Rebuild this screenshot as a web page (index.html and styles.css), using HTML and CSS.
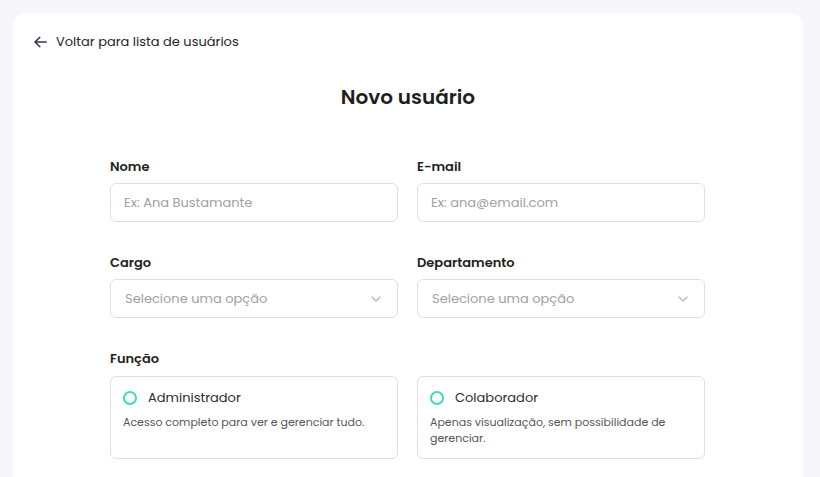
FILE: index.html
```html
<!DOCTYPE html>
<html lang="pt-BR">
<head>
<meta charset="utf-8">
<title>Novo usuário</title>
<link rel="stylesheet" href="styles.css">
</head>
<body>
<main class="card">
  <a class="back" href="#">
    <svg class="back-icon" width="13" height="12" viewBox="0 0 13 12" fill="none" stroke="currentColor" stroke-width="1.5" stroke-linecap="round" stroke-linejoin="round"><path d="M12.2 6H1M5.8 1.2L1 6l4.8 4.8"/></svg>
    <span>Voltar para lista de usuários</span>
  </a>
  <h1 class="title">Novo usuário</h1>
  <form class="form">
    <div class="field">
      <label class="label">Nome</label>
      <div class="input"><span class="placeholder">Ex: Ana Bustamante</span></div>
    </div>
    <div class="field">
      <label class="label">E-mail</label>
      <div class="input"><span class="placeholder">Ex: ana@email.com</span></div>
    </div>
    <div class="field">
      <label class="label">Cargo</label>
      <div class="input select"><span class="placeholder sel">Selecione uma opção</span>
        <svg class="chev" width="10" height="6" viewBox="0 0 10 6" fill="none" stroke="currentColor" stroke-width="1.2" stroke-linecap="round" stroke-linejoin="round"><path d="M1 1l4 4 4-4"/></svg>
      </div>
    </div>
    <div class="field">
      <label class="label">Departamento</label>
      <div class="input select"><span class="placeholder sel">Selecione uma opção</span>
        <svg class="chev" width="10" height="6" viewBox="0 0 10 6" fill="none" stroke="currentColor" stroke-width="1.2" stroke-linecap="round" stroke-linejoin="round"><path d="M1 1l4 4 4-4"/></svg>
      </div>
    </div>
    <div class="field">
      <label class="label">Função</label>
      <div class="option">
        <div class="option-head"><span class="radio"></span><span class="option-title">Administrador</span></div>
        <p class="option-desc">Acesso completo para ver e gerenciar tudo.</p>
      </div>
    </div>
    <div class="field">
      <label class="label label-empty">&nbsp;</label>
      <div class="option">
        <div class="option-head"><span class="radio"></span><span class="option-title">Colaborador</span></div>
        <p class="option-desc">Apenas visualização, sem possibilidade de gerenciar.</p>
      </div>
    </div>
  </form>
</main>
</body>
</html>
```

FILE: styles.css
```css
* { box-sizing: border-box; }
html, body { margin: 0; padding: 0; }
body {
  background: #f6f6fb;
  font-family: "Poppins", "Inter", "Liberation Sans", sans-serif;
  color: #1f1f24;
  padding: 14px 17px 0 13px;
  height: 477px;
  overflow: hidden;
}
.card {
  background: #ffffff;
  border-radius: 10px;
  min-height: 520px;
  padding: 20px 0 0 0;
}
.back {
  display: flex;
  align-items: center;
  gap: 9px;
  margin-left: 21px;
  text-decoration: none;
  color: #25222d;
  font-size: 13px;
  line-height: 16px;
  height: 16px;
}
.back-icon { color: #3a3350; }
.title {
  margin: 34px 0 0 0;
  text-align: center;
  font-size: 20px;
  line-height: 26px;
  font-weight: 600;
  color: #1f1f22;
}
.form {
  width: 595px;
  margin: 47px 0 0 97px;
  display: grid;
  grid-template-columns: 288px 288px;
  column-gap: 19px;
  row-gap: 31px;
}
.field { display: flex; flex-direction: column; }
.label {
  font-size: 13px;
  line-height: 20px;
  font-weight: 600;
  color: #1f1f22;
  margin-bottom: 6px;
}
.input {
  height: 39px;
  border: 1px solid #e0e0e4;
  border-radius: 6px;
  display: flex;
  align-items: center;
  padding: 0 13px;
}
.placeholder { font-size: 13px; color: #a0a0a5; }
.select { padding: 0 14px; justify-content: space-between; }
.chev { color: #b5b5ba; margin-right: 2px; }
.option {
  height: 83px;
  margin-top: 1px;
  border: 1px solid #e0e0e4;
  border-radius: 6px;
  padding: 12px 12px 0 12px;
}
.option-head { display: flex; align-items: center; gap: 11px; height: 18px; }
.radio {
  width: 14px; height: 14px;
  border: 2px solid #3fd8c2;
  border-radius: 50%;
  flex: none;
}
.option-title { font-size: 13px; color: #2b2b30; }
.option-desc {
  margin: 7px 0 0 0;
  font-size: 11px;
  line-height: 16px;
  color: #555559;
}
```
